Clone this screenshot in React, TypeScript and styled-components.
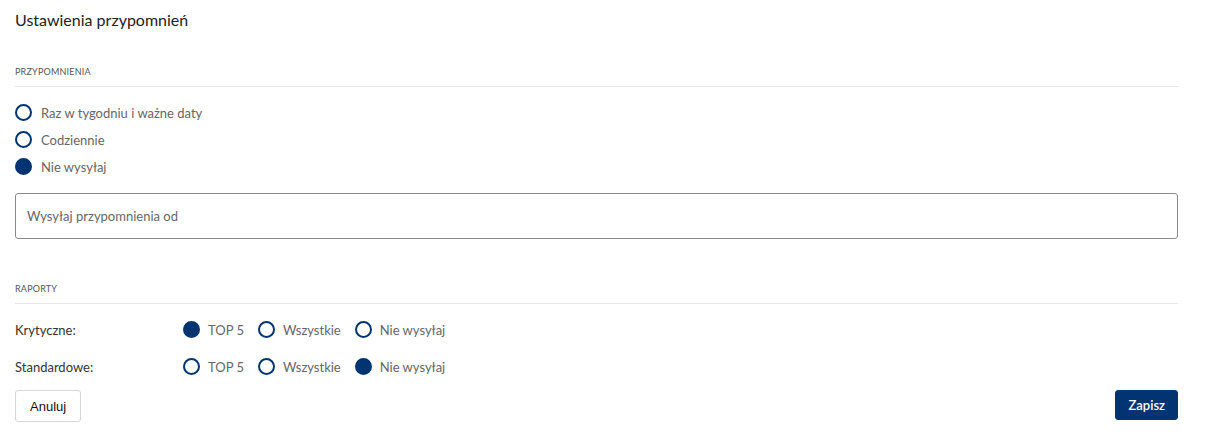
import React, { useState } from "react";
import styled, { createGlobalStyle } from "styled-components";

const Global = createGlobalStyle`
  html, body { margin: 0; padding: 0; background: #fff; }
  body { font-family: "Lato", "Noto Sans", sans-serif; }
  * { box-sizing: border-box; }
`;

const NAVY = "#023471";

const Page = styled.div`
  padding: 8px 37px 0 15px;
  display: flex;
  flex-direction: column;
`;

const Title = styled.h1`
  margin: 0;
  font-size: 16px;
  line-height: 24px;
  font-weight: 400;
  color: #222;
`;

const SectionHeader = styled.div<{ $top: number }>`
  margin-top: ${(p) => p.$top}px;
  font-size: 9px;
  line-height: 16px;
  letter-spacing: 0.2px;
  text-transform: uppercase;
  color: #555;
  padding-bottom: 6px;
  border-bottom: 1px solid #e6e6e6;
`;

const RadioList = styled.div`
  margin-top: 12px;
  display: flex;
  flex-direction: column;
`;

const RadioLabel = styled.label<{ $h: number; $gap: number }>`
  display: inline-flex;
  align-items: center;
  gap: ${(p) => p.$gap}px;
  height: ${(p) => p.$h}px;
  font-size: 13px;
  color: #666;
  cursor: pointer;
`;

const Circle = styled.span<{ $checked: boolean }>`
  width: 17px;
  height: 17px;
  border-radius: 50%;
  border: 2px solid ${NAVY};
  background: ${(p) => (p.$checked ? NAVY : "#fff")};
  flex: 0 0 auto;
`;

const HiddenInput = styled.input`
  display: none;
`;

const TextBox = styled.div`
  margin-top: 13px;
  height: 46px;
  border: 1px solid #8a8a8a;
  border-radius: 3px;
  display: flex;
  align-items: center;
  padding: 0 11px;
  font-size: 13px;
  color: #666;
`;

const ReportRows = styled.div`
  margin-top: 7px;
  display: flex;
  flex-direction: column;
`;

const ReportRow = styled.div`
  display: grid;
  grid-template-columns: 168px auto;
  align-items: center;
  height: 37px;
`;

const RowLabel = styled.span`
  font-size: 13px;
  color: #333;
`;

const Options = styled.div`
  display: flex;
  align-items: center;
  gap: 14px;
`;

const Actions = styled.div`
  margin-top: 5px;
  display: flex;
  justify-content: space-between;
  align-items: flex-start;
`;

const Button = styled.button<{ $primary?: boolean }>`
  height: ${(p) => (p.$primary ? 30 : 32)}px;
  padding: 0 ${(p) => (p.$primary ? 12 : 14)}px;
  border-radius: 3px;
  font-size: 13px;
  font-family: ${(p) => (p.$primary ? '"Lato", sans-serif' : '"Liberation Sans", Arial, sans-serif')};
  font-weight: ${(p) => (p.$primary ? 600 : 400)};
  border: 1px solid ${(p) => (p.$primary ? NAVY : "#d6d6d6")};
  background: ${(p) => (p.$primary ? NAVY : "#fff")};
  color: ${(p) => (p.$primary ? "#fff" : "#111")};
  cursor: pointer;
`;

function Radio({
  label,
  checked,
  onChange,
  height = 27,
  gap = 9,
}: {
  label: string;
  checked: boolean;
  onChange: () => void;
  height?: number;
  gap?: number;
}) {
  return (
    <RadioLabel $h={height} $gap={gap}>
      <HiddenInput type="radio" checked={checked} onChange={onChange} />
      <Circle $checked={checked} />
      {label}
    </RadioLabel>
  );
}

const reminderOptions = ["Raz w tygodniu i ważne daty", "Codziennie", "Nie wysyłaj"];
const reportOptions = ["TOP 5", "Wszystkie", "Nie wysyłaj"];

export default function App() {
  const [reminder, setReminder] = useState(2);
  const [critical, setCritical] = useState(0);
  const [standard, setStandard] = useState(2);

  return (
    <>
      <Global />
      <Page>
        <Title>Ustawienia przypomnień</Title>
        <SectionHeader $top={32}>Przypomnienia</SectionHeader>
        <RadioList>
          {reminderOptions.map((o, i) => (
            <Radio key={o} label={o} checked={reminder === i} onChange={() => setReminder(i)} />
          ))}
        </RadioList>
        <TextBox>Wysyłaj przypomnienia od</TextBox>
        <SectionHeader $top={42}>Raporty</SectionHeader>
        <ReportRows>
          <ReportRow>
            <RowLabel>Krytyczne:</RowLabel>
            <Options>
              {reportOptions.map((o, i) => (
                <Radio key={o} label={o} checked={critical === i} onChange={() => setCritical(i)} height={37} gap={8} />
              ))}
            </Options>
          </ReportRow>
          <ReportRow>
            <RowLabel>Standardowe:</RowLabel>
            <Options>
              {reportOptions.map((o, i) => (
                <Radio key={o} label={o} checked={standard === i} onChange={() => setStandard(i)} height={37} gap={8} />
              ))}
            </Options>
          </ReportRow>
        </ReportRows>
        <Actions>
          <Button>Anuluj</Button>
          <Button $primary>Zapisz</Button>
        </Actions>
      </Page>
    </>
  );
}
